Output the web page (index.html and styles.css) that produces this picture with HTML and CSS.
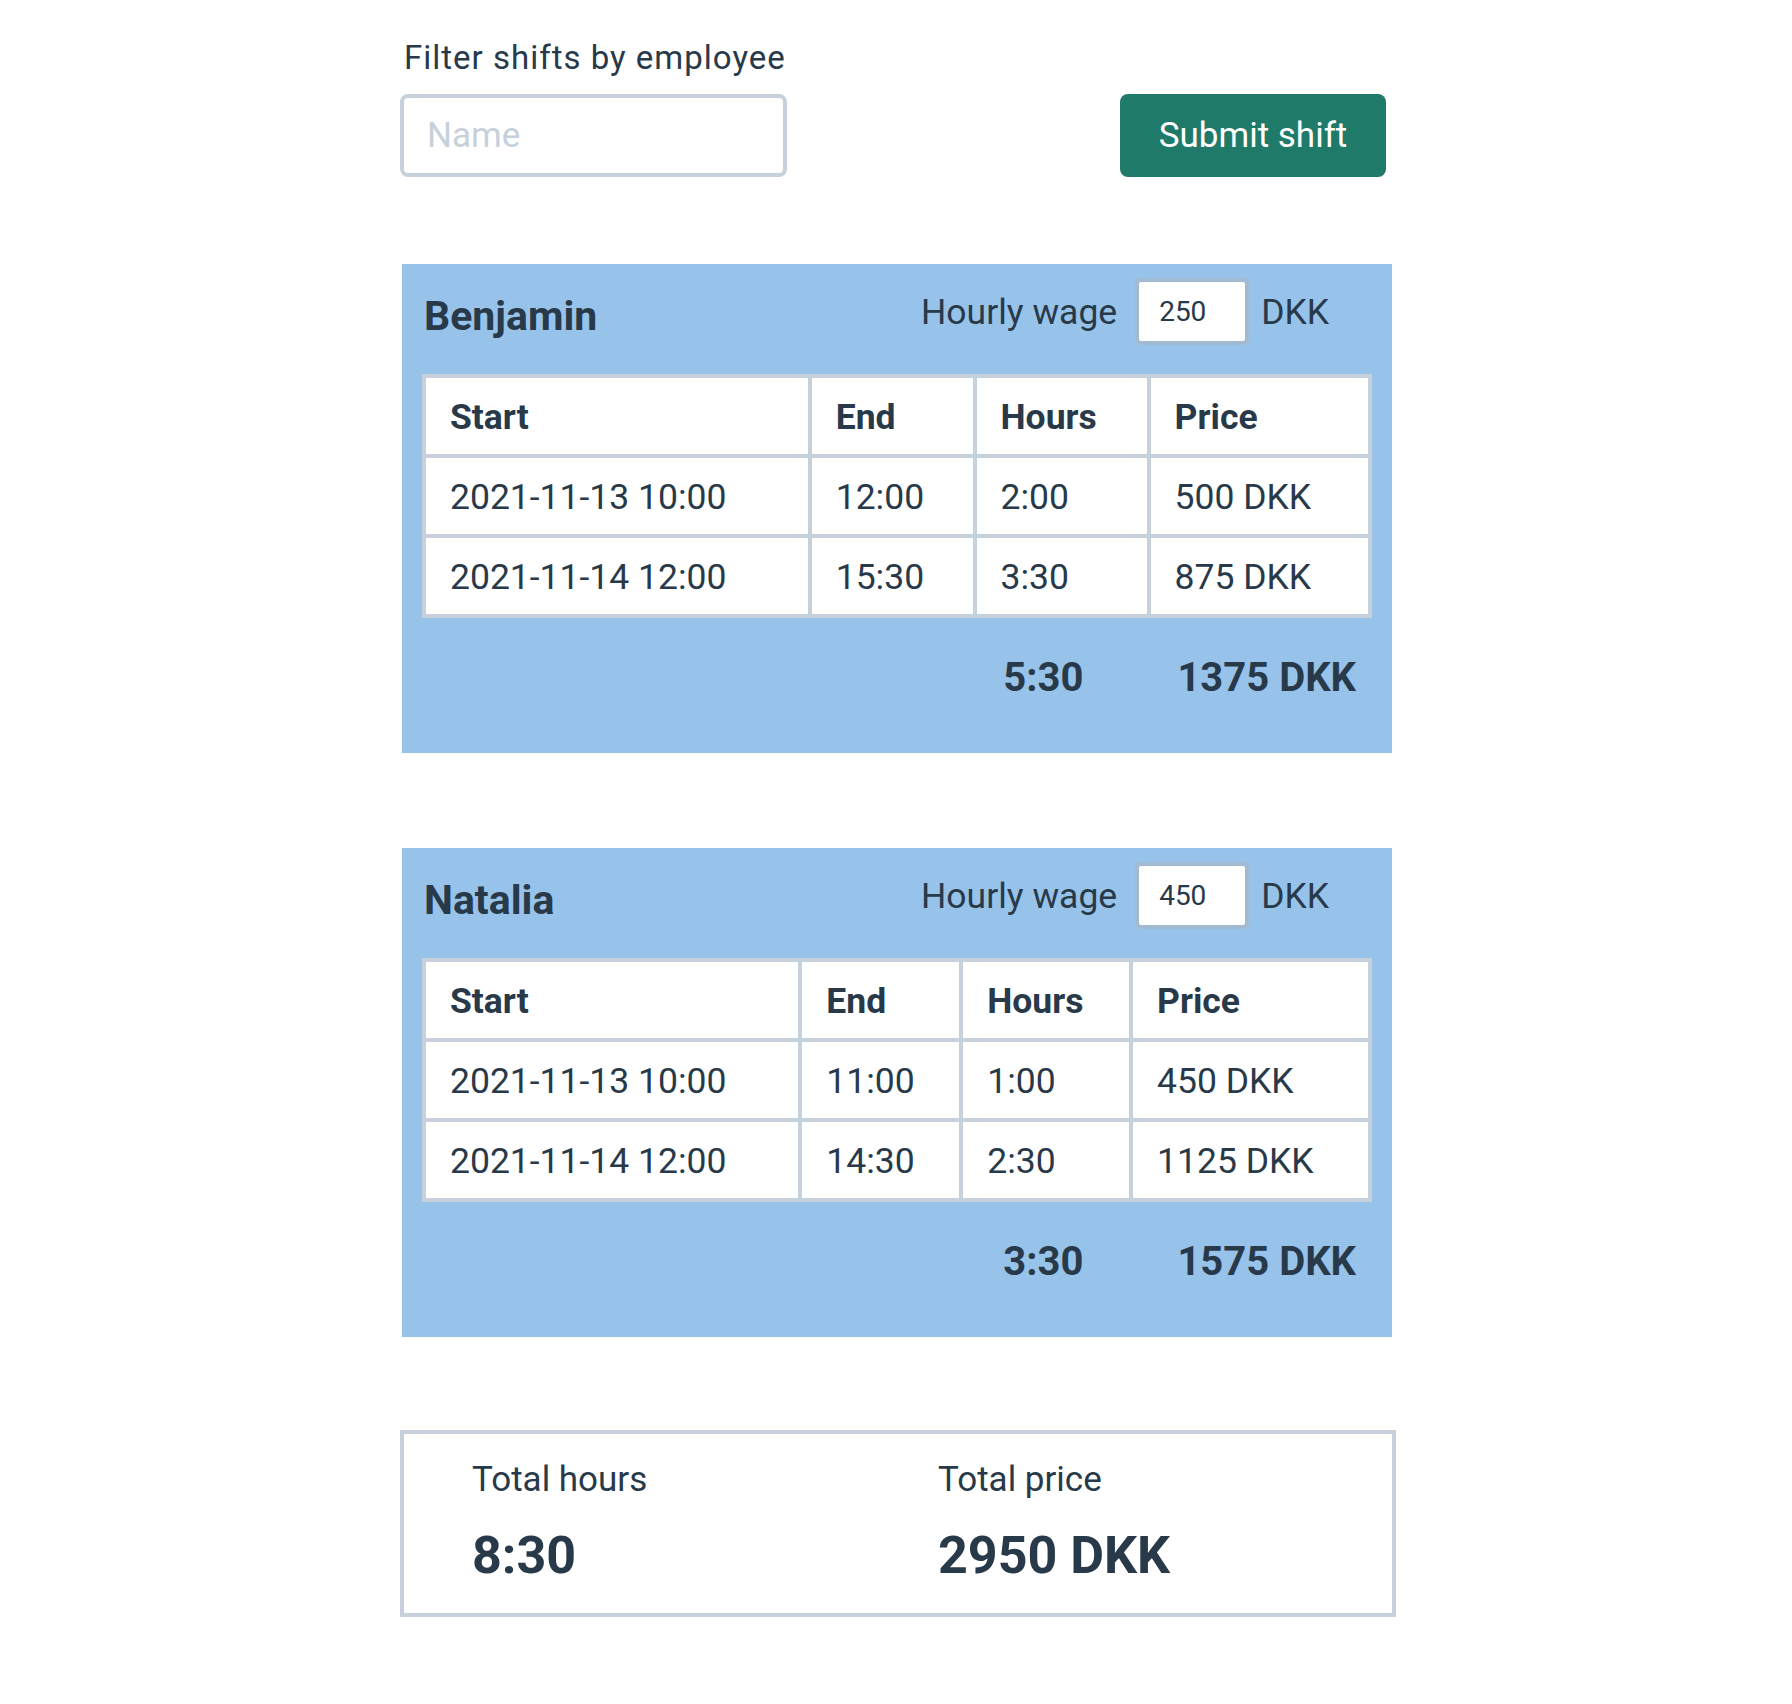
FILE: index.html
```html
<!DOCTYPE html>
<html lang="en">
<head>
<meta charset="utf-8">
<title>Shifts</title>
<link rel="stylesheet" href="styles.css">
</head>
<body>
<div class="page">
  <div class="filter">
    <label class="filter-label" for="name">Filter shifts by employee</label>
    <div class="filter-row">
      <input id="name" class="name-input" type="text" placeholder="Name">
      <button class="submit" type="button">Submit shift</button>
    </div>
  </div>

  <section class="card">
    <div class="card-head">
      <h2 class="emp-name">Benjamin</h2>
      <div class="wage">
        <span class="wage-label">Hourly wage</span>
        <input class="wage-input" type="text" value="250">
        <span class="wage-unit">DKK</span>
      </div>
    </div>
    <table class="shifts">
      <thead>
        <tr><th>Start</th><th>End</th><th>Hours</th><th>Price</th></tr>
      </thead>
      <tbody>
        <tr><td>2021-11-13 10:00</td><td>12:00</td><td>2:00</td><td>500 DKK</td></tr>
        <tr><td>2021-11-14 12:00</td><td>15:30</td><td>3:30</td><td>875 DKK</td></tr>
      </tbody>
    </table>
    <div class="totals"><span>5:30</span><span>1375 DKK</span></div>
  </section>

  <section class="card">
    <div class="card-head">
      <h2 class="emp-name">Natalia</h2>
      <div class="wage">
        <span class="wage-label">Hourly wage</span>
        <input class="wage-input" type="text" value="450">
        <span class="wage-unit">DKK</span>
      </div>
    </div>
    <table class="shifts">
      <thead>
        <tr><th>Start</th><th>End</th><th>Hours</th><th>Price</th></tr>
      </thead>
      <tbody>
        <tr><td>2021-11-13 10:00</td><td>11:00</td><td>1:00</td><td>450 DKK</td></tr>
        <tr><td>2021-11-14 12:00</td><td>14:30</td><td>2:30</td><td>1125 DKK</td></tr>
      </tbody>
    </table>
    <div class="totals"><span>3:30</span><span>1575 DKK</span></div>
  </section>

  <div class="summary">
    <div class="sum-item">
      <div class="sum-label">Total hours</div>
      <div class="sum-value">8:30</div>
    </div>
    <div class="sum-item">
      <div class="sum-label">Total price</div>
      <div class="sum-value">2950 DKK</div>
    </div>
  </div>
</div>
</body>
</html>
```

FILE: styles.css
```css
* { box-sizing: border-box; }

html, body {
  margin: 0;
  padding: 0;
  background: #ffffff;
}

body {
  font-family: Roboto, "Liberation Sans", sans-serif;
  color: #283949;
}

.page {
  width: 996px;
  margin-left: 400px;
  padding-top: 39px;
  padding-bottom: 80px;
}

.filter-label {
  display: block;
  font-size: 33px;
  line-height: 38px;
  letter-spacing: 1px;
  padding-left: 4px;
  margin-bottom: 17px;
}

.filter-row {
  display: flex;
  justify-content: space-between;
  align-items: center;
  padding-right: 10px;
}

.name-input {
  width: 387px;
  height: 83px;
  border: 4px solid #c6d1db;
  border-radius: 8px;
  padding: 0 23px;
  font-family: inherit;
  font-size: 35px;
  color: #283949;
  outline: none;
  background: #fff;
}

.name-input::placeholder {
  color: #c6d1db;
}

.submit {
  width: 266px;
  height: 83px;
  border: none;
  border-radius: 8px;
  background: #1f7a69;
  color: #ffffff;
  font-family: inherit;
  font-size: 35px;
  padding: 0;
  cursor: pointer;
}

.card {
  width: 990px;
  margin: 87px 0 0 2px;
  background: #97c3ea;
  padding: 14px 20px 51px;
}

.card + .card {
  margin-top: 95px;
}

.card-head {
  display: flex;
  justify-content: space-between;
  align-items: center;
  height: 67px;
}

.emp-name {
  margin: 0;
  padding-top: 9px;
  padding-left: 2px;
  font-size: 41px;
  line-height: 48px;
  font-weight: 700;
}

.wage {
  display: flex;
  align-items: center;
  gap: 18px;
  margin-right: 43px;
}

.wage-label,
.wage-unit {
  font-size: 35.5px;
  line-height: 42px;
}

.wage-unit {
  margin-left: -6px;
}

.wage-input {
  flex-shrink: 0;
  width: 114px;
  height: 67px;
  border: 4px solid #a3bbd2;
  border-radius: 6px;
  background: #ffffff;
  padding: 0 20px;
  font-family: inherit;
  font-size: 28px;
  color: #283949;
  outline: none;
}

.shifts {
  width: 100%;
  margin-top: 29px;
  border-collapse: collapse;
  background: #ffffff;
}

.shifts th,
.shifts td {
  border: 4px solid #c6d1db;
  padding: 19px 24px 17px;
  font-size: 35.5px;
  line-height: 40px;
  text-align: left;
  white-space: nowrap;
}

.shifts th {
  font-weight: 700;
}

.shifts td {
  font-weight: 400;
}

.totals {
  display: flex;
  justify-content: flex-end;
  gap: 94px;
  margin-top: 36px;
  padding-right: 16px;
  font-size: 40px;
  line-height: 48px;
  font-weight: 700;
}

.summary {
  margin-top: 93px;
  border: 4px solid #c6d1db;
  display: grid;
  grid-template-columns: 466px 1fr;
  padding: 25px 0 27px 68px;
}

.sum-label {
  font-size: 35px;
  line-height: 42px;
}

.sum-value {
  margin-top: 25px;
  font-size: 52px;
  line-height: 60px;
  font-weight: 700;
}
```
